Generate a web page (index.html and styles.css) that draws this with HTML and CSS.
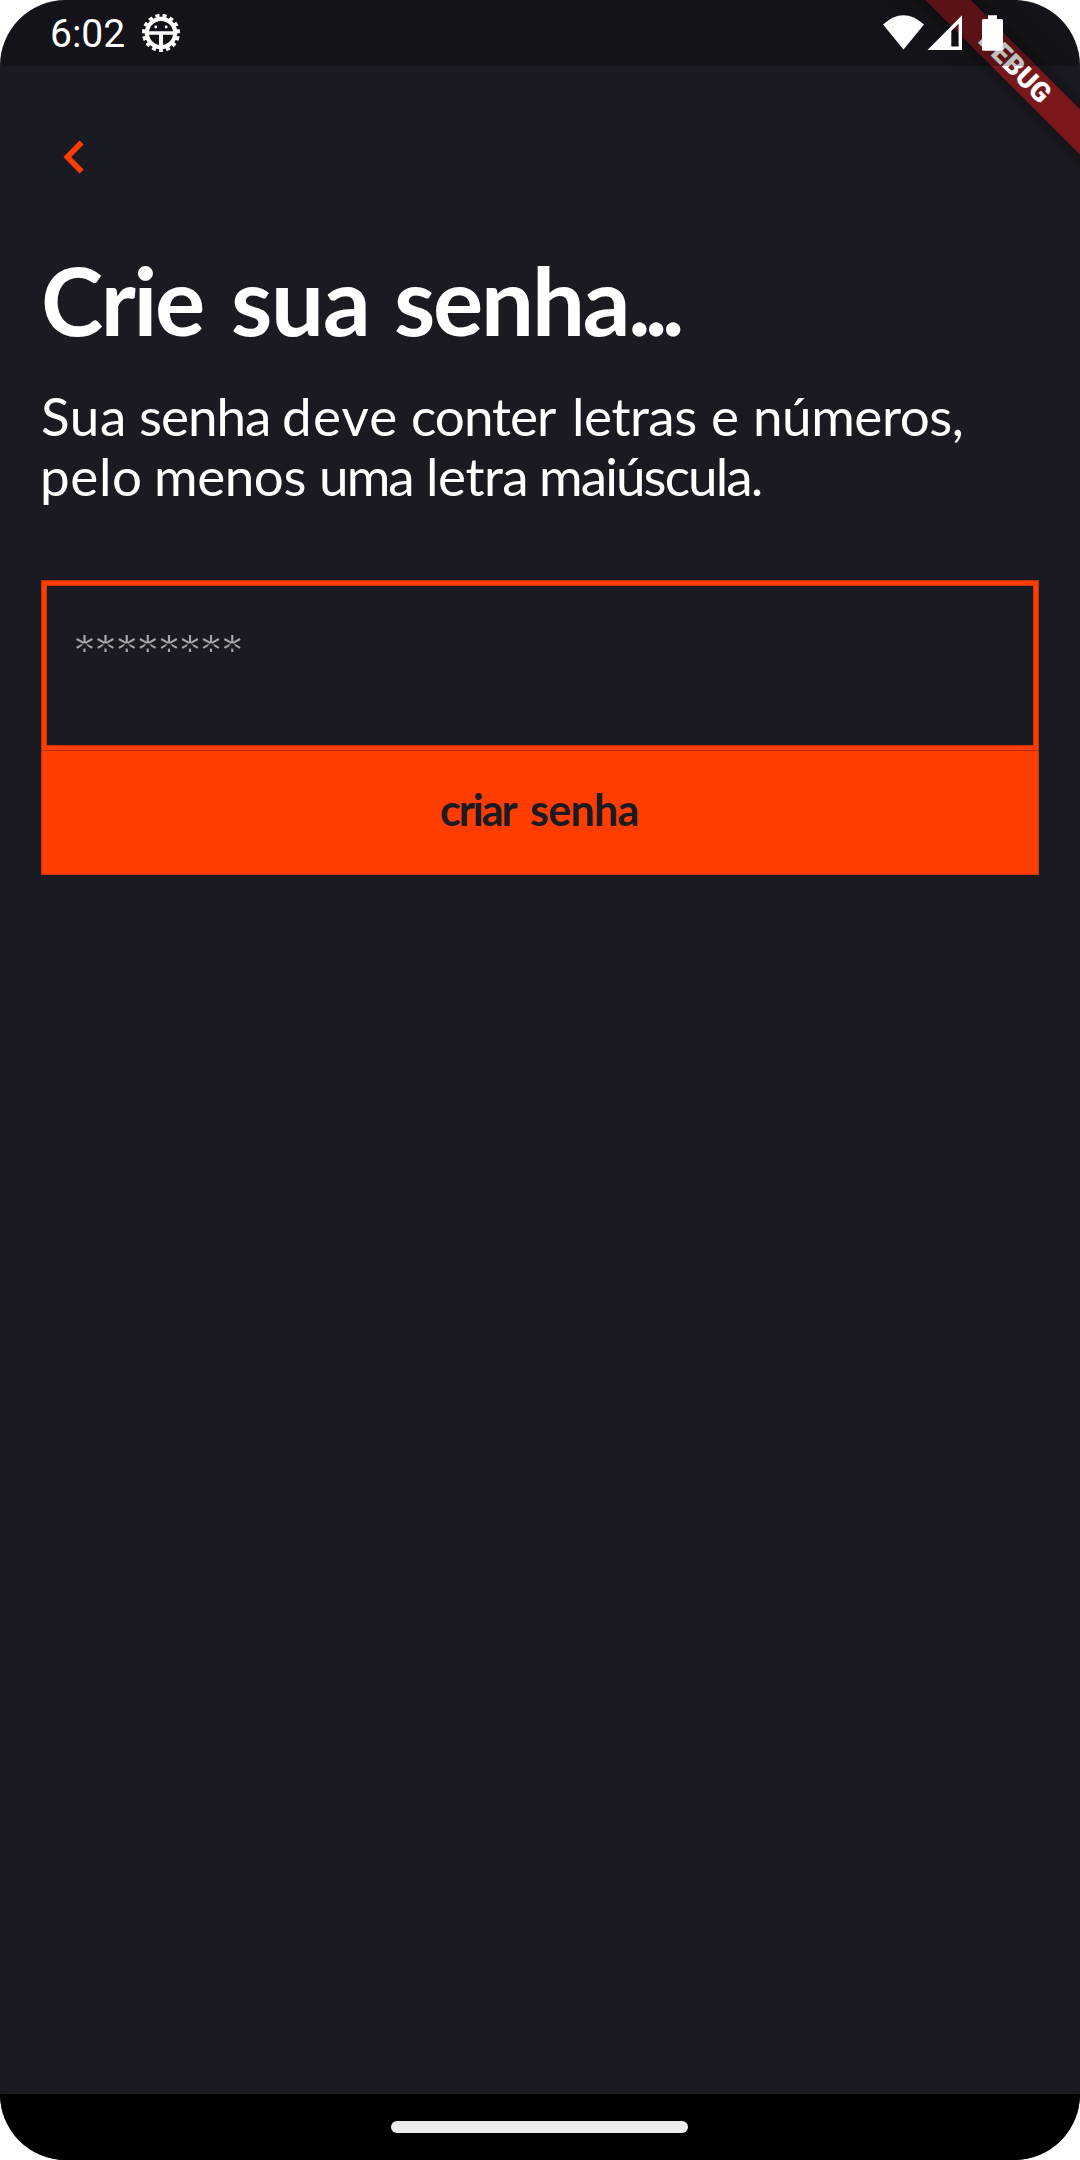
FILE: index.html
```html
<!DOCTYPE html>
<html lang="pt-BR">
<head>
<meta charset="utf-8">
<title>Crie sua senha</title>
<link rel="stylesheet" href="styles.css">
</head>
<body>
<div class="screen">
  <div class="banner">DEBUG</div>
  <header class="status">
    <span class="clock">6:02</span>
    <svg class="bug" width="40" height="40" viewBox="-20 -20 40 40" fill="none" stroke="#fff">
      <circle r="14.2" stroke-width="4.2"/>
      <circle r="17" stroke-width="4" pathLength="15" stroke-dasharray=".56 .44" stroke-dashoffset=".28" transform="rotate(90)"/>
      <path d="M-13 0H13" stroke-width="3.4"/>
      <path d="M0 0V14" stroke-width="4"/>
      <circle cx="-5.2" cy="-6" r="1.4" fill="#fff" stroke="none"/>
      <circle cx="5.2" cy="-6" r="1.4" fill="#fff" stroke="none"/>
    </svg>
    <svg class="signals" width="121" height="36" viewBox="883 15 121 36" fill="#fff">
      <path d="M883 24.5Q903.5 6 924 24.5L903.5 49.5z"/>
      <path fill-rule="evenodd" d="M927.5 50H962V15.3zM951.3 31V46.6H958.6V23.7z"/>
      <path d="M988 15.3H997V19H1001.5Q1003 19 1003 20.5V49.2Q1003 50.8 1001.5 50.8H983.5Q982 50.8 982 49.2V20.5Q982 19 983.5 19H988z"/>
    </svg>
  </header>
  <main class="page">
    <svg class="back" width="22" height="34" viewBox="63 140 22 34" fill="#ff3d00"><path d="M79.6 140.5L83.6 144.5 71.2 157 83.6 169.5 79.6 173.5 63.4 157z"/></svg>
    <h1 class="title"><span class="w1">Crie</span> <span class="w2">sua</span> <span class="w3">senha<span class="dots">...</span></span></h1>
    <p class="hint">
      <span class="line line-a"><span class="wide">Sua</span> <span class="tight">senha</span> <span class="wider">deve</span> <span class="tight">conter</span> <span class="snug">letras</span> <span>e</span> <span class="snug">números,</span></span>
      <span class="line line-b"><span class="wide">pelo</span> <span class="snug">menos</span> <span class="tighter">uma</span> <span class="snug">letra</span> <span class="tighter">maiúscula.</span></span>
    </p>
    <div class="field"><span class="placeholder">********</span></div>
    <div class="button"><span class="b1">criar</span> <span class="b2">senha</span></div>
  </main>
  <footer class="nav"><span class="pill"></span></footer>
</div>
</body>
</html>
```
FILE: styles.css
```css
* { box-sizing: border-box; }
body { margin: 0; background: #fff; }
.screen {
  position: relative;
  display: flex;
  flex-direction: column;
  width: 1080px;
  height: 2160px;
  overflow: hidden;
  border-radius: 66px;
  background: #1a1a22;
  color: #fff;
  font-family: Lato, sans-serif;
}
.status {
  position: relative;
  display: flex;
  align-items: flex-start;
  height: 66px;
  padding: 0 76px 0 50px;
  background: rgba(0, 0, 0, .25);
}
.clock { width: 72px; font: 400 39px/69px Roboto, sans-serif; }
.bug { margin: 13px 0 0 19px; }
.signals { margin: 15px 0 0 auto; }
.banner {
  position: absolute;
  left: 865px;
  top: 51px;
  width: 300px;
  height: 32px;
  transform: rotate(45deg);
  background: #7a181b;
  box-shadow: 0 0 20px rgba(0, 0, 0, .5);
  font: 900 27.5px/32px Roboto, sans-serif;
  letter-spacing: .3px;
  text-align: center;
}
.page {
  display: flex;
  flex-direction: column;
  flex: 1;
  padding: 74px 41px 0;
}
.back { margin-left: 22px; }
.title {
  display: grid;
  grid-template-columns: 190px 163px 1fr;
  margin: 69px 0 0;
  font-size: 94px;
  font-weight: 700;
  line-height: 114px;
  white-space: nowrap;
}
.w1 { letter-spacing: -2.3px; }
.w2 { letter-spacing: -1.2px; }
.w3 { letter-spacing: -2.2px; }
.dots { letter-spacing: -5.5px; }
.hint { margin: 29px 0 0; font-size: 53px; line-height: 60px; }
.line { display: grid; white-space: nowrap; }
.line-a { grid-template-columns: 98px 143px 129px 161px 139px 42px 1fr; }
.line-b { grid-template-columns: 114px 165px 107px 113px 1fr; margin-left: -1px; }
.wide { letter-spacing: .6px; }
.wider { letter-spacing: 1.2px; }
.snug { letter-spacing: -.45px; }
.tight { letter-spacing: -1px; }
.tighter { letter-spacing: -1.9px; }
.field {
  height: 171px;
  margin-top: 74px;
  padding: 47px 33px 0;
  border: 1px solid #b5330d;
  box-shadow: inset 0 0 0 4px #ff3d00, inset 0 0 0 5px #c4350a;
}
.placeholder {
  display: block;
  width: 170px;
  color: #a8a8aa;
  font: 400 38px/44px "DejaVu Sans", sans-serif;
  letter-spacing: 2.1px;
  -webkit-mask: radial-gradient(circle at 50% 18px, transparent 2px, #000 3.5px) -1px 0 / 21.1px 44px repeat-x;
}
.button {
  display: grid;
  grid-template-columns: 90px 110px;
  height: 124px;
  padding: 22px 0 0 398px;
  border: solid #c4350a;
  border-width: 0 1px 1px;
  background: #ff3d00;
  color: #1a1a22;
  font-size: 43px;
  font-weight: 700;
  line-height: 74px;
  white-space: nowrap;
}
.b1 { letter-spacing: -2px; }
.b2 { letter-spacing: -.7px; }
.nav {
  display: flex;
  align-items: center;
  justify-content: center;
  height: 66px;
  padding-right: 1px;
  background: #000;
}
.pill { width: 297px; height: 12px; border-radius: 6px; background: #ececec; }
```
